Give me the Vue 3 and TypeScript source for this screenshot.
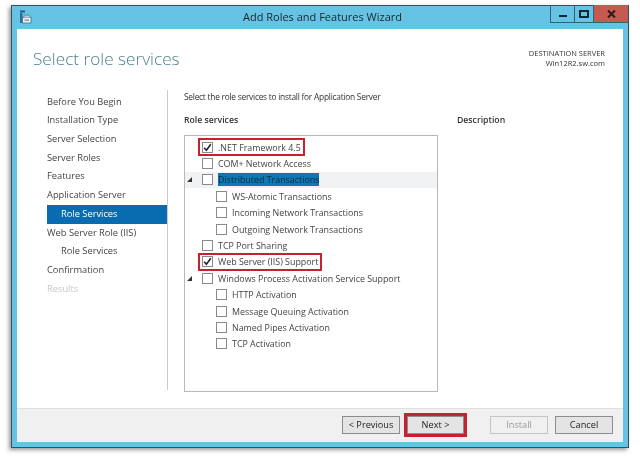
<script setup lang="ts">
interface Role { label: string; level: number; checked?: boolean; mark?: boolean; expander?: boolean; selected?: boolean }
const nav = [
  { label: 'Before You Begin' }, { label: 'Installation Type' }, { label: 'Server Selection' },
  { label: 'Server Roles' }, { label: 'Features' }, { label: 'Application Server' },
  { label: 'Role Services', sub: true, active: true }, { label: 'Web Server Role (IIS)' },
  { label: 'Role Services', sub: true }, { label: 'Confirmation' }, { label: 'Results', off: true },
]
const roles: Role[] = [
  { label: '.NET Framework 4.5', level: 0, checked: true, mark: true },
  { label: 'COM+ Network Access', level: 0 },
  { label: 'Distributed Transactions', level: 0, expander: true, selected: true },
  { label: 'WS-Atomic Transactions', level: 1 },
  { label: 'Incoming Network Transactions', level: 1 },
  { label: 'Outgoing Network Transactions', level: 1 },
  { label: 'TCP Port Sharing', level: 0 },
  { label: 'Web Server (IIS) Support', level: 0, checked: true, mark: true },
  { label: 'Windows Process Activation Service Support', level: 0, expander: true },
  { label: 'HTTP Activation', level: 1 },
  { label: 'Message Queuing Activation', level: 1 },
  { label: 'Named Pipes Activation', level: 1 },
  { label: 'TCP Activation', level: 1 },
]
</script>

<template>
  <div class="page">
    <div class="window">
      <header class="titlebar">
        <svg class="app-icon" width="13" height="14" viewBox="0 0 13 14">
          <rect x="1" y="0.5" width="5" height="2" fill="#1d5f86" />
          <rect x="1" y="3" width="2.5" height="10" fill="#2b6f96" />
          <rect x="3.5" y="7.5" width="8.5" height="5.5" fill="#e9eef0" stroke="#4d6f80" stroke-width="0.8" />
          <path d="M4 7.5 L6.5 5 H9.5 L12 7.5" fill="#b9d6e2" stroke="#4d6f80" stroke-width="0.8" />
          <rect x="5.5" y="9.5" width="4.5" height="1.4" fill="#7d97a3" />
        </svg>
        <span class="title">Add Roles and Features Wizard</span>
        <div class="controls">
          <div class="ctl ctl-min"><span class="min-glyph"></span></div>
          <div class="ctl ctl-max"><span class="max-glyph"></span></div>
          <div class="ctl ctl-close">
            <svg width="9" height="8" viewBox="0 0 9 8"><path d="M1 0.5 L8 7.5 M8 0.5 L1 7.5" stroke="#2b1a1a" stroke-width="2" /></svg>
          </div>
        </div>
      </header>

      <div class="client">
        <div class="content">
          <div class="head">
            <h1>Select role services</h1>
            <div class="dest">
              <div>DESTINATION SERVER</div>
              <div>Win12R2.sw.com</div>
            </div>
          </div>

          <div class="body">
            <nav class="nav">
              <div
                v-for="(n, i) in nav"
                :key="i"
                class="nav-item"
                :class="{ sub: n.sub, active: n.active, off: n.off }"
              >{{ n.label }}</div>
            </nav>

            <main class="main">
              <p class="intro">Select the role services to install for Application Server</p>
              <div class="columns">
                <section class="left">
                  <div class="col-title">Role services</div>
                  <div class="tree">
                    <div
                      v-for="r in roles"
                      :key="r.label"
                      class="row"
                      :class="[`level-${r.level}`, { 'row-selected': r.selected }]"
                    >
                      <span class="arrow-slot"><span v-if="r.expander" class="arrow"></span></span>
                      <span class="entry" :class="{ mark: r.mark }">
                        <span class="box">
                          <svg v-if="r.checked" width="9" height="9" viewBox="0 0 9 9"><path d="M1.2 4.8 L3.4 7.2 L7.8 1.2" fill="none" stroke="#222" stroke-width="1.6" /></svg>
                        </span>
                        <span class="label" :class="{ sel: r.selected }">{{ r.label }}</span>
                      </span>
                    </div>
                  </div>
                </section>
                <section class="right">
                  <div class="col-title">Description</div>
                </section>
              </div>
            </main>
          </div>
        </div>

        <footer class="footer">
          <button class="btn">&lt; Previous</button>
          <button class="btn next">Next &gt;</button>
          <button class="btn install" disabled>Install</button>
          <button class="btn">Cancel</button>
        </footer>
      </div>
    </div>
  </div>
</template>

<style>
html, body { margin: 0; background: #fff; }
</style>

<style scoped>
.page {
  width: 640px;
  height: 458px;
  padding: 5px 0 0 11px;
  box-sizing: border-box;
  background: #fff;
  font-family: "Open Sans", "Noto Sans", sans-serif;
  overflow: hidden;
  filter: blur(0.3px);
}
.window {
  width: 618px;
  height: 443px;
  box-sizing: border-box;
  border: 1px solid #33525f;
  background: #66c3e3;
  box-shadow: -2px 2px 4px rgba(70, 70, 70, 0.55);
  display: flex;
  flex-direction: column;
  padding: 0 5px 5px;
}
.titlebar {
  height: 23px;
  flex: none;
  position: relative;
  display: flex;
  align-items: center;
  justify-content: center;
  padding-bottom: 2px;
  box-sizing: border-box;
}
.app-icon { position: absolute; left: 2px; top: 4px; }
.title { font-size: 11px; color: #17272e; margin-left: 5px; }
.controls {
  position: absolute;
  top: -1px;
  right: -5px;
  display: flex;
  height: 17px;
  border-bottom: 1px solid #2f6377;
  border-left: 1px solid #2f6377;
}
.ctl { display: flex; align-items: center; justify-content: center; }
.ctl-min { width: 23px; border-right: 1px solid #2f6377; }
.ctl-max { width: 18px; border-right: 1px solid #2f6377; }
.ctl-close { width: 34px; background: #c75a50; }
.min-glyph { width: 8px; height: 2px; background: #14262e; margin-top: 5px; }
.max-glyph { width: 6px; height: 4px; border: 2px solid #14262e; border-top-width: 2px; }
.client {
  flex: 1;
  display: flex;
  flex-direction: column;
  background: #fff;
  min-height: 0;
}
.content { flex: 1; padding: 0 18px 0 16px; min-height: 0; }
.head {
  height: 61px;
  display: flex;
  justify-content: space-between;
  align-items: flex-start;
}
h1 {
  margin: 15px 0 0;
  font-size: 17.2px;
  font-weight: 300;
  color: #4f8190;
  line-height: 30px;
}
.dest {
  margin-top: 19px;
  text-align: right;
  font-size: 7.5px;
  line-height: 10px;
  color: #333;
}
.body { display: flex; }
.nav {
  margin-left: 14px;
  height: 300px;
  box-sizing: border-box;
  border-right: 1px solid #ccc;
  width: 121px;
  padding-top: 2.5px;
}
.nav-item {
  height: 18.72px;
  line-height: 18.7px;
  font-size: 9.3px;
  color: #444;
  white-space: nowrap;
}
.nav-item.sub { padding-left: 14px; }
.nav-item.active { background: #0a6cb0; color: #fff; }
.nav-item.off { color: #c8c8c8; }
.main { flex: 1; padding-left: 16px; }
.intro {
  margin: 0;
  font-size: 8.4px;
  letter-spacing: -0.25px;
  line-height: 14px;
  color: #333;
}
.columns { display: flex; margin-top: 9px; }
.left { width: 254px; }
.right { padding-left: 19px; }
.col-title {
  font-size: 8.7px;
  font-weight: 600;
  line-height: 14px;
  color: #333;
}
.tree {
  margin-top: 8px;
  height: 257px;
  box-sizing: border-box;
  border: 1px solid #b8b8b8;
  padding-top: 3px;
}
.row {
  height: 16.4px;
  display: flex;
  align-items: center;
  font-size: 8.9px;
  color: #444;
  white-space: nowrap;
}
.row-selected { background: #f0f2f3; }
.arrow-slot { flex: none; display: flex; justify-content: flex-end; padding-right: 7px; width: 7px; }
.arrow {
  width: 0;
  height: 0;
  border-style: solid;
  border-width: 0 0 5px 5px;
  border-color: transparent transparent #333 transparent;
}
.level-1 .entry { margin-left: 14px; }
.entry {
  display: inline-flex;
  align-items: center;
  gap: 5px;
  height: 16px;
  padding: 0 3px;
  box-sizing: border-box;
}
.entry.mark { outline: 2px solid #c7202e; outline-offset: -1px; }
.box {
  width: 9px;
  height: 9px;
  flex: none;
  border: 1px solid #8a8a8a;
  background: #fff;
  display: flex;
  align-items: center;
  justify-content: center;
}
.label.sel { background: #0c78b4; color: #0d2a3a; }
.footer {
  height: 34px;
  flex: none;
  box-sizing: border-box;
  border-top: 1px solid #dfdfdf;
  background: #f0f0f0;
  display: flex;
  align-items: center;
  padding: 0 9px 2px 325px;
}
.btn {
  width: 58px;
  height: 18px;
  box-sizing: border-box;
  border: 1px solid #8c8c8c;
  background: #e4e4e4;
  font-family: inherit;
  font-size: 9.2px;
  color: #222;
  padding: 0;
}
.btn.next {
  margin-left: 7px;
  outline: 3px solid #c7202e;
  outline-offset: 0;
  width: 57px;
}
.btn.install {
  margin-left: 26px;
  margin-right: 7px;
  background: #f0f0f0;
  border-color: #c4c4c4;
  color: #9a9a9a;
}
</style>
